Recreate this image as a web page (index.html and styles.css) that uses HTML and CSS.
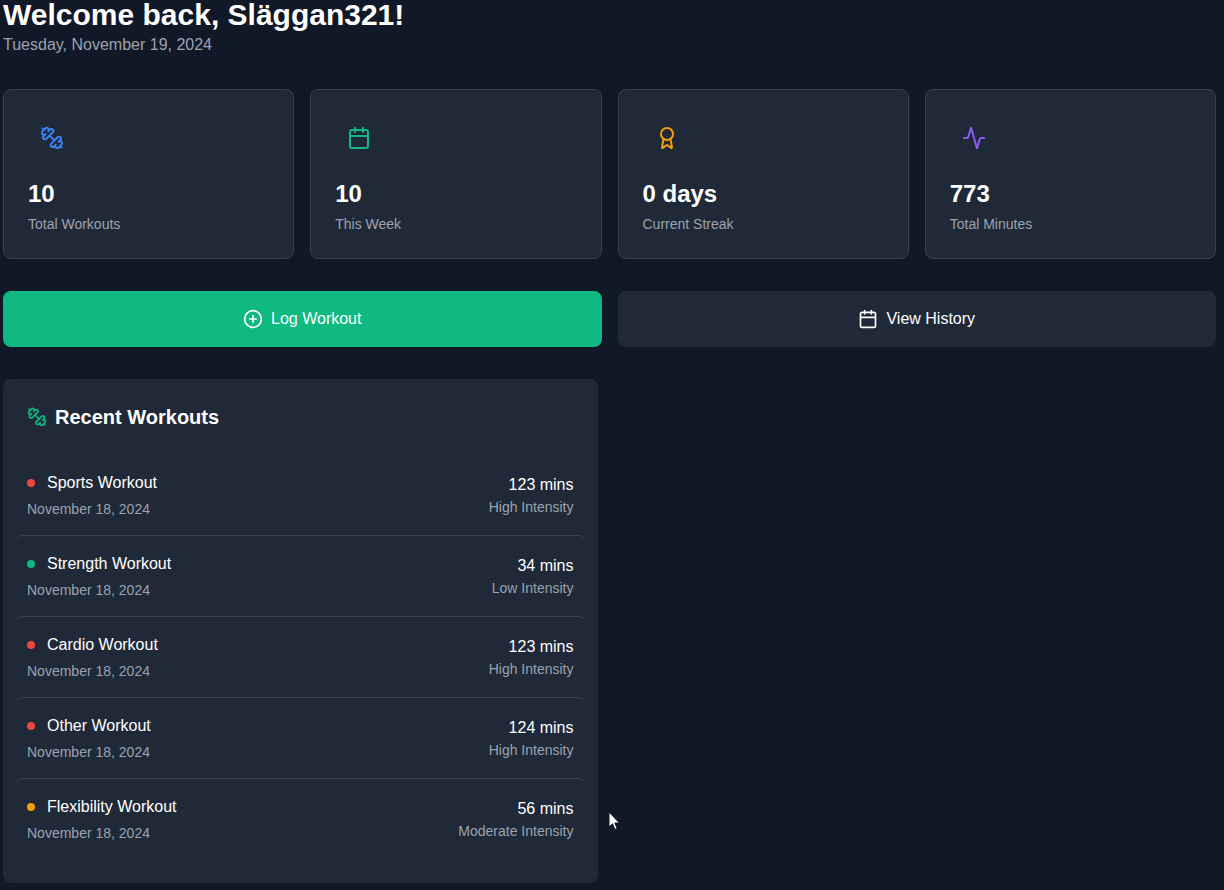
FILE: index.html
```html
<!DOCTYPE html>
<html lang="en">
<head>
  <meta charset="UTF-8" />
  <meta name="viewport" content="width=device-width, initial-scale=1.0"/>
  <title>Dashboard - Workout Tracker</title>
  <link rel="stylesheet" href="styles.css">
</head>
<body>

  <div class="page">
    <header class="welcome">
      <h1>Welcome back, Släggan321!</h1>
      <p>Tuesday, November 19, 2024</p>
    </header>

    <section class="stats">
      <div class="stat-card">
        <div class="stat-icon blue">
          <svg class="icon" viewBox="0 0 24 24"><path d="M14.4 14.4 9.6 9.6"/><path d="M18.657 21.485a2 2 0 1 1-2.829-2.828l-1.767 1.768a2 2 0 1 1-2.829-2.829l6.364-6.364a2 2 0 1 1 2.829 2.829l-1.768 1.767a2 2 0 1 1 2.828 2.829z"/><path d="m21.5 21.5-1.4-1.4"/><path d="M3.9 3.9 2.5 2.5"/><path d="M6.404 12.768a2 2 0 1 1-2.829-2.829l1.768-1.767a2 2 0 1 1-2.828-2.829l2.828-2.828a2 2 0 1 1 2.829 2.828l1.767-1.768a2 2 0 1 1 2.829 2.829z"/></svg>
        </div>
        <div class="stat-value">10</div>
        <div class="stat-label">Total Workouts</div>
      </div>
      <div class="stat-card">
        <div class="stat-icon green">
          <svg class="icon" viewBox="0 0 24 24"><path d="M8 2v4"/><path d="M16 2v4"/><rect width="18" height="18" x="3" y="4" rx="2"/><path d="M3 10h18"/></svg>
        </div>
        <div class="stat-value">10</div>
        <div class="stat-label">This Week</div>
      </div>
      <div class="stat-card">
        <div class="stat-icon amber">
          <svg class="icon" viewBox="0 0 24 24"><path d="m15.477 12.89 1.515 8.526a.5.5 0 0 1-.81.47l-3.58-2.687a1 1 0 0 0-1.197 0l-3.586 2.686a.5.5 0 0 1-.81-.469l1.514-8.526"/><circle cx="12" cy="8" r="6"/></svg>
        </div>
        <div class="stat-value">0 days</div>
        <div class="stat-label">Current Streak</div>
      </div>
      <div class="stat-card">
        <div class="stat-icon purple">
          <svg class="icon" viewBox="0 0 24 24"><path d="M22 12h-2.48a2 2 0 0 0-1.93 1.46l-2.35 8.36a.25.25 0 0 1-.48 0L9.24 2.18a.25.25 0 0 0-.48 0l-2.35 8.36A2 2 0 0 1 4.49 12H2"/></svg>
        </div>
        <div class="stat-value">773</div>
        <div class="stat-label">Total Minutes</div>
      </div>
    </section>

    <section class="actions">
      <button class="action-btn primary">
        <svg class="icon small" viewBox="0 0 24 24"><circle cx="12" cy="12" r="10"/><path d="M8 12h8"/><path d="M12 8v8"/></svg>
        Log Workout
      </button>
      <button class="action-btn">
        <svg class="icon small" viewBox="0 0 24 24"><path d="M8 2v4"/><path d="M16 2v4"/><rect width="18" height="18" x="3" y="4" rx="2"/><path d="M3 10h18"/></svg>
        View History
      </button>
    </section>

    <section class="panels">
      <div class="panel">
        <h2>
          <svg class="icon small green" viewBox="0 0 24 24"><path d="M14.4 14.4 9.6 9.6"/><path d="M18.657 21.485a2 2 0 1 1-2.829-2.828l-1.767 1.768a2 2 0 1 1-2.829-2.829l6.364-6.364a2 2 0 1 1 2.829 2.829l-1.768 1.767a2 2 0 1 1 2.828 2.829z"/><path d="m21.5 21.5-1.4-1.4"/><path d="M3.9 3.9 2.5 2.5"/><path d="M6.404 12.768a2 2 0 1 1-2.829-2.829l1.768-1.767a2 2 0 1 1-2.828-2.829l2.828-2.828a2 2 0 1 1 2.829 2.828l1.767-1.768a2 2 0 1 1 2.829 2.829z"/></svg>
          Recent Workouts
        </h2>

        <div class="workout">
          <div>
            <div class="workout-name"><span class="dot red"></span>Sports Workout</div>
            <div class="workout-date">November 18, 2024</div>
          </div>
          <div class="workout-right">
            <div class="workout-mins">123 mins</div>
            <div class="workout-level">High Intensity</div>
          </div>
        </div>
        <div class="workout">
          <div>
            <div class="workout-name"><span class="dot emerald"></span>Strength Workout</div>
            <div class="workout-date">November 18, 2024</div>
          </div>
          <div class="workout-right">
            <div class="workout-mins">34 mins</div>
            <div class="workout-level">Low Intensity</div>
          </div>
        </div>
        <div class="workout">
          <div>
            <div class="workout-name"><span class="dot red"></span>Cardio Workout</div>
            <div class="workout-date">November 18, 2024</div>
          </div>
          <div class="workout-right">
            <div class="workout-mins">123 mins</div>
            <div class="workout-level">High Intensity</div>
          </div>
        </div>
        <div class="workout">
          <div>
            <div class="workout-name"><span class="dot red"></span>Other Workout</div>
            <div class="workout-date">November 18, 2024</div>
          </div>
          <div class="workout-right">
            <div class="workout-mins">124 mins</div>
            <div class="workout-level">High Intensity</div>
          </div>
        </div>
        <div class="workout">
          <div>
            <div class="workout-name"><span class="dot orange"></span>Flexibility Workout</div>
            <div class="workout-date">November 18, 2024</div>
          </div>
          <div class="workout-right">
            <div class="workout-mins">56 mins</div>
            <div class="workout-level">Moderate Intensity</div>
          </div>
        </div>
      </div>
    </section>
  </div>

  <!-- Mouse pointer caught in the capture -->
  <svg class="cursor" width="13" height="20" viewBox="0 0 13 20"><path d="M1 1v15l3.5-3.2 2.4 5.6 2.3-1-2.4-5.4h4.6z"/></svg>

</body>
</html>
```

FILE: styles.css
```css
* {
  box-sizing: border-box;
}
body {
  font-family: 'Liberation Sans', Arial, sans-serif;
  background: #111827;
  color: #fff;
  margin: 0;
  padding: 0;
  height: 890px;
  overflow: hidden;
  position: relative;
}
.page {
  margin-top: -3px;
  padding: 0 8px 0 3px;
}
.welcome {
  margin-bottom: 32px;
}
.welcome h1 {
  margin: 0;
  font-size: 30px;
  line-height: 36px;
  font-weight: 700;
}
.welcome p {
  margin: 0;
  font-size: 16px;
  line-height: 24px;
  color: #9ca3af;
}
.icon {
  display: block;
  width: 24px;
  height: 24px;
  flex: none;
  fill: none;
  stroke: currentColor;
  stroke-width: 2;
  stroke-linecap: round;
  stroke-linejoin: round;
}
.icon.small {
  width: 20px;
  height: 20px;
}
.blue { color: #3b82f6; }
.green { color: #10b981; }
.amber { color: #f59e0b; }
.purple { color: #8b5cf6; }

.stats {
  display: grid;
  grid-template-columns: repeat(4, 1fr);
  gap: 16px;
  margin-bottom: 32px;
}
.stat-card {
  background: #1f2937;
  border: 1px solid #374151;
  border-radius: 8px;
  padding: 24px;
}
.stat-icon {
  width: 48px;
  padding: 12px;
  margin-bottom: 16px;
}
.stat-value {
  font-size: 24px;
  line-height: 32px;
  font-weight: 700;
}
.stat-label {
  margin-top: 4px;
  font-size: 14px;
  line-height: 20px;
  color: #9ca3af;
}

.actions {
  display: grid;
  grid-template-columns: repeat(2, 1fr);
  gap: 16px;
  margin-bottom: 32px;
}
.action-btn {
  display: flex;
  align-items: center;
  justify-content: center;
  gap: 8px;
  padding: 16px;
  font-family: inherit;
  font-size: 16px;
  line-height: 24px;
  color: #fff;
  background: #1f2937;
  border: none;
  border-radius: 8px;
  cursor: pointer;
}
.action-btn.primary {
  background: #10b981;
}

.panels {
  display: grid;
  grid-template-columns: repeat(2, 1fr);
  gap: 24px;
}
.panel {
  background: #1f2937;
  border-radius: 8px;
  padding: 24px;
}
.panel h2 {
  display: flex;
  align-items: center;
  gap: 8px;
  margin: 0 0 24px;
  font-size: 20px;
  line-height: 28px;
  font-weight: 700;
}
.workout {
  display: flex;
  align-items: center;
  justify-content: space-between;
  margin: 0 -12px;
  padding: 16px 12px;
  border-top: 1px solid #374151;
  border-radius: 8px;
}
.workout:first-of-type {
  border-top: none;
  padding-top: 16px;
}
.workout-name {
  display: flex;
  align-items: center;
  gap: 12px;
  margin-bottom: 4px;
  font-size: 16px;
  line-height: 24px;
}
.dot {
  width: 8px;
  height: 8px;
  border-radius: 50%;
}
.dot.red { background: #ef4444; }
.dot.emerald { background: #10b981; }
.dot.orange { background: #f59e0b; }
.workout-date,
.workout-level {
  font-size: 14px;
  line-height: 20px;
  color: #9ca3af;
}
.workout-right {
  text-align: right;
}
.workout-mins {
  font-size: 16px;
  line-height: 24px;
}
.cursor {
  position: absolute;
  left: 608px;
  top: 811px;
}
.cursor path {
  fill: #fff;
  stroke: #111827;
  stroke-width: 1;
}
```
